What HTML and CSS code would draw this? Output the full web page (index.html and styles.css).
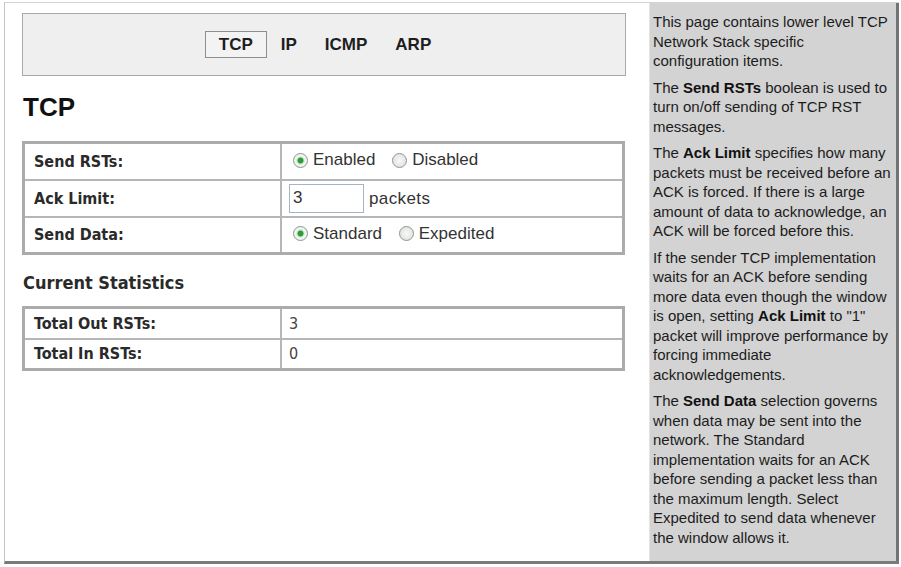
FILE: index.html
```html
<!DOCTYPE html>
<html>
<head>
<meta charset="utf-8">
<link rel="stylesheet" href="styles.css">
</head>
<body>
<div class="frame">
  <div class="main">
    <div class="nav">
      <span class="tab active">TCP</span>
      <span class="tab">IP</span>
      <span class="tab">ICMP</span>
      <span class="tab">ARP</span>
    </div>
    <h1 class="title">TCP</h1>
    <table class="grid settings">
      <tr>
        <td class="label">Send RSTs:</td>
        <td class="value">
          <label class="opt"><input type="radio" name="rst" checked>Enabled</label>
          <label class="opt"><input type="radio" name="rst">Disabled</label>
        </td>
      </tr>
      <tr>
        <td class="label">Ack Limit:</td>
        <td class="value"><input class="num" type="text" value="3"><span class="unit">packets</span></td>
      </tr>
      <tr>
        <td class="label">Send Data:</td>
        <td class="value">
          <label class="opt"><input type="radio" name="sd" checked>Standard</label>
          <label class="opt"><input type="radio" name="sd">Expedited</label>
        </td>
      </tr>
    </table>
    <h2 class="subtitle">Current Statistics</h2>
    <table class="grid stats">
      <tr><td class="label">Total Out RSTs:</td><td class="stat">3</td></tr>
      <tr><td class="label">Total In RSTs:</td><td class="stat">0</td></tr>
    </table>
  </div>
  <div class="side">
    <p>This page contains lower level TCP<br>Network Stack specific<br>configuration items.</p>
    <p>The <b>Send RSTs</b> boolean is used to<br>turn on/off sending of TCP RST<br>messages.</p>
    <p>The <b>Ack Limit</b> specifies how many<br>packets must be received before an<br>ACK is forced. If there is a large<br>amount of data to acknowledge, an<br>ACK will be forced before this.</p>
    <p>If the sender TCP implementation<br>waits for an ACK before sending<br>more data even though the window<br>is open, setting <b>Ack Limit</b> to "1"<br>packet will improve performance by<br>forcing immediate<br>acknowledgements.</p>
    <p>The <b>Send Data</b> selection governs<br>when data may be sent into the<br>network. The Standard<br>implementation waits for an ACK<br>before sending a packet less than<br>the maximum length. Select<br>Expedited to send data whenever<br>the window allows it.</p>
  </div>
</div>
</body>
</html>
```
FILE: styles.css
```css
html, body {
  margin: 0;
  padding: 0;
  background: #fff;
}
body {
  font-family: "Liberation Sans", Arial, sans-serif;
  color: #222;
}
.frame {
  display: flex;
  margin: 2px 0 0 4px;
  width: 894px;
  height: 558px;
  border-left: 1px solid #c4c4c4;
  border-top: 1px solid #d4d4d4;
  border-bottom: 3px solid #7a7a7a;
}
.main {
  flex: 1;
  padding: 10px 23px 0 17px;
  background: #fff;
}
.nav {
  height: 61px;
  border: 1px solid #a9a9a9;
  background: #efefef;
  display: flex;
  justify-content: center;
  align-items: center;
  padding-left: 2px;
}
.tab {
  font-weight: bold;
  font-size: 17px;
  line-height: 19px;
  padding: 3px 13px;
  border: 1px solid transparent;
  color: #1e1e1e;
}
.tab.active {
  border-color: #8e8e8e;
  background: #f3f3f3;
}
.title {
  margin: 16px 0 0 1px;
  font-size: 26px;
  line-height: 30px;
  font-weight: bold;
  color: #111;
}
.grid {
  width: 603px;
  border-collapse: collapse;
  border: 3px solid #ababab;
}
.grid td {
  border: 2px solid #b6b6b6;
  padding: 0;
}
.settings {
  margin-top: 19px;
}
.settings tr {
  height: 37px;
}
.label {
  width: 246px;
  padding-left: 9px !important;
  font-family: "DejaVu Sans Condensed", "DejaVu Sans", sans-serif;
  font-stretch: condensed;
  font-weight: bold;
  font-size: 16px;
  color: #2a2a2a;
}
.value {
  padding-left: 11px !important;
  font-size: 17px;
  color: #333;
}
.opt {
  display: inline-flex;
  align-items: center;
  margin-right: 12px;
}
.opt input {
  -webkit-appearance: none;
  appearance: none;
  width: 15px;
  height: 15px;
  margin: 0 5px 0 0;
  border-radius: 50%;
  border: 1px solid #8d9a8d;
  background: radial-gradient(circle at 50% 50%, #f8f8f8 0, #dcdcdc 100%);
}
.opt input:checked {
  background: radial-gradient(circle at 50% 50%, #2f9a3a 0 2.6px, #cfe9cf 3.4px, #f4f8f4 5px, #dcdcdc 100%);
}
.num {
  width: 70px;
  height: 27px;
  box-sizing: content-box;
  padding: 0 0 0 3px;
  margin: 0 5px 0 -4px;
  border: 1px solid #a6b4c4;
  font-family: "Liberation Sans", Arial, sans-serif;
  font-size: 17px;
  color: #333;
  vertical-align: middle;
}
.unit {
  vertical-align: middle;
  letter-spacing: 0.4px;
}
.subtitle {
  margin: 17px 0 0 1px;
  font-family: "DejaVu Sans Condensed", "DejaVu Sans", sans-serif;
  font-stretch: condensed;
  font-weight: bold;
  font-size: 18px;
  line-height: 22px;
  color: #2a2a2a;
}
.stats {
  margin-top: 12px;
}
.stats tr {
  height: 31px;
}
.stat {
  padding-left: 7px !important;
  font-family: "DejaVu Sans Condensed", "DejaVu Sans", sans-serif;
  font-stretch: condensed;
  font-size: 16px;
  color: #444;
}
.side {
  background: #d3d3d3;
  border-left: 1px solid #e4e4e4;
  border-right: 3px solid #737373;
  padding: 9px 0 0 3px;
  box-sizing: border-box;
  width: 250px;
  font-family: "Liberation Sans", Arial, sans-serif;
  font-size: 15px;
  line-height: 19.5px;
  color: #1c1c1c;
  white-space: nowrap;
  overflow: hidden;
}
.side p {
  margin: 0 0 7px 0;
}
.side b {
  color: #111;
}
```
